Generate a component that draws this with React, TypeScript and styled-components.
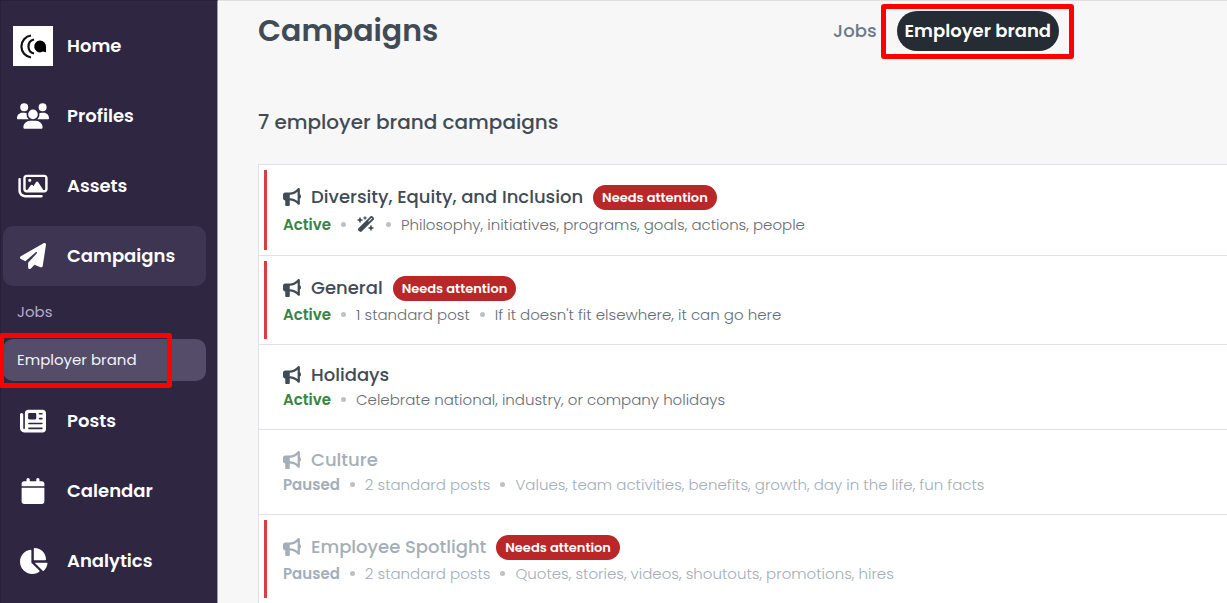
import React from 'react';
import styled, { createGlobalStyle, css } from 'styled-components';
import {
  FaBullhorn,
  FaCalendar,
  FaChartPie,
  FaNewspaper,
  FaPaperPlane,
  FaRegImages,
  FaUsers,
  FaWandMagicSparkles,
} from 'react-icons/fa6';

const GlobalStyle = createGlobalStyle`
  *, *::before, *::after { box-sizing: border-box; }
  html, body { margin: 0; height: 100%; overflow: hidden; }
  body {
    font-family: Poppins, Inter, "Open Sans", sans-serif;
    background: #f7f7f7;
    color: #414b55;
  }
  #root { height: 100%; }
  a { color: inherit; text-decoration: none; }
`;

const Page = styled.div`
  display: flex;
  min-height: 100%;
`;

const Sidebar = styled.nav`
  flex: none;
  display: flex;
  flex-direction: column;
  gap: 10px;
  width: 218px;
  padding: 15px 11px 15px 2px;
  border: 1px solid #272038;
  border-right-color: #9f9ba8;
  background: #2f2642;
`;

const NavLink = styled.a<{ $active?: boolean }>`
  display: flex;
  align-items: center;
  gap: 14px;
  height: 60px;
  padding-left: 10px;
  border-radius: 10px;
  background: ${(p) => (p.$active ? '#3e3552' : 'transparent')};
  color: #fff;
  font-size: 18px;
  font-weight: 600;
`;

const NavIcon = styled.span`
  display: flex;
  justify-content: center;
  width: 40px;

  svg {
    width: 32px;
    height: 26px;
  }
`;

const NavLabel = styled.span`
  padding-bottom: 2px;
`;

const BrandMark = styled.svg`
  && {
    width: 40px;
    height: 40px;
    background: #fff;
  }
`;

const SubNav = styled.div`
  display: flex;
  flex-direction: column;
  gap: 6px;
  margin-top: -5px;
`;

const highlight = css`
  content: '';
  position: absolute;
  border: 5px solid #fe0000;
  border-radius: 3px;
  pointer-events: none;
`;

const SubLink = styled.a<{ $active?: boolean }>`
  position: relative;
  display: flex;
  align-items: center;
  height: 42px;
  padding: 0 0 2px 14px;
  border-radius: 10px;
  background: ${(p) => (p.$active ? '#544c68' : 'transparent')};
  color: ${(p) => (p.$active ? '#f4f2f7' : '#b7abc9')};
  font-size: 15px;

  ${(p) =>
    p.$active &&
    css`
      &::after {
        ${highlight}
        inset: -6px 34px -7px -4px;
      }
    `}
`;

const Main = styled.main`
  flex: 1;
  min-width: 0;
  padding: 10px 0 0 40px;
  border-top: 1px solid #dedede;
`;

const Header = styled.header`
  display: flex;
  align-items: center;
  justify-content: space-between;
  height: 40px;
  padding-right: 168px;
`;

const Title = styled.h1`
  margin: 0;
  font-size: 30px;
  font-weight: 600;
`;

const Tabs = styled.div`
  display: flex;
  gap: 12px;
`;

const Tab = styled.button<{ $active?: boolean }>`
  position: relative;
  height: 40px;
  border: 0;
  border-radius: 20px;
  background: ${(p) => (p.$active ? '#262c33' : 'transparent')};
  color: ${(p) => (p.$active ? '#fff' : '#6c7a87')};
  font: inherit;
  font-size: 18px;
  font-weight: ${(p) => (p.$active ? 600 : 500)};
  padding: 0 8px 2px;

  ${(p) =>
    p.$active &&
    css`
      &::after {
        ${highlight}
        inset: -7px -15px -8px -16px;
      }
    `}
`;

const Count = styled.h2`
  margin: 56px 0 27px;
  font-size: 20px;
  line-height: 30px;
  font-weight: 500;
`;

const List = styled.ul`
  margin: 0;
  padding: 0;
  list-style: none;
  border: 1px solid #dfe3e7;
  border-right: 0;
  background: #fff;
`;

const Row = styled.li<{ $paused?: boolean; $flagged?: boolean }>`
  position: relative;
  padding: 17px 24px;
  color: ${(p) => (p.$paused ? '#a5aeb8' : '#414b55')};

  & + & { border-top: 1px solid #dfe3e7; }

  ${(p) =>
    p.$flagged &&
    css`
      &::before {
        content: '';
        position: absolute;
        inset: 5px auto 5px 5px;
        width: 3px;
        background: #d93d40;
      }
    `}
`;

const RowTitle = styled.h3`
  display: flex;
  align-items: center;
  gap: 10px;
  min-height: 25px;
  margin: 0;
  font-size: 18px;
  line-height: 25px;
  font-weight: 500;

  svg { width: 18px; height: 18px; }
`;

const Badge = styled.span`
  margin: 3px 0 1px;
  padding: 0 9px;
  border-radius: 13px;
  background: #b92728;
  color: #fff;
  font-size: 13px;
  font-weight: 600;
`;

const Meta = styled.div<{ $paused?: boolean }>`
  display: flex;
  align-items: center;
  gap: 10px;
  font-size: 15px;
  line-height: 25px;
  font-weight: 300;
  color: ${(p) => (p.$paused ? '#a5aeb8' : '#666d76')};
`;

const Status = styled.strong<{ $paused?: boolean }>`
  color: ${(p) => (p.$paused ? '#a5aeb8' : '#388445')};
  font-weight: 600;
`;

const Dot = styled.span`
  width: 5px;
  height: 5px;
  border-radius: 50%;
  background: #bbc1c8;
`;

const Wand = styled(FaWandMagicSparkles)`
  width: 20px;
  height: 16px;
  margin: 5px 0 6px;
  color: #414b55;
`;

type Campaign = {
  name: string;
  paused?: boolean;
  flagged?: boolean;
  auto?: boolean;
  posts?: string;
  about: string;
};

const campaigns: Campaign[] = [
  {
    name: 'Diversity, Equity, and Inclusion',
    flagged: true,
    auto: true,
    about: 'Philosophy, initiatives, programs, goals, actions, people',
  },
  {
    name: 'General',
    flagged: true,
    posts: '1 standard post',
    about: "If it doesn't fit elsewhere, it can go here",
  },
  { name: 'Holidays', about: 'Celebrate national, industry, or company holidays' },
  {
    name: 'Culture',
    paused: true,
    posts: '2 standard posts',
    about: 'Values, team activities, benefits, growth, day in the life, fun facts',
  },
  {
    name: 'Employee Spotlight',
    paused: true,
    flagged: true,
    posts: '2 standard posts',
    about: 'Quotes, stories, videos, shoutouts, promotions, hires',
  },
];

const Logo = () => (
  <BrandMark viewBox="0 0 40 40" aria-hidden="true">
    <path d="M18 9.5A11.1 11.1 0 0 0 18 31.5" fill="none" stroke="#111" strokeWidth="2.2" />
    <path d="M21 13.5A7.2 7.2 0 0 0 21 27.5" fill="none" stroke="#111" strokeWidth="2.2" />
    <path d="M27 14.6a5.9 5.9 0 1 0 3 11l3 .6v-5.7a5.9 5.9 0 0 0-6-5.9z" fill="#000" />
  </BrandMark>
);

type NavItemProps = { icon: React.ReactNode; label: string; active?: boolean };

const NavItem = ({ icon, label, active }: NavItemProps) => (
  <NavLink href="#" $active={active}>
    <NavIcon>{icon}</NavIcon>
    <NavLabel>{label}</NavLabel>
  </NavLink>
);

const CampaignRow = ({ name, paused, flagged, auto, posts, about }: Campaign) => (
  <Row $paused={paused} $flagged={flagged}>
    <RowTitle>
      <FaBullhorn />
      {name}
      {flagged && <Badge>Needs attention</Badge>}
    </RowTitle>
    <Meta $paused={paused}>
      <Status $paused={paused}>{paused ? 'Paused' : 'Active'}</Status>
      <Dot />
      {auto && <Wand />}
      {posts && <span>{posts}</span>}
      {(auto || posts) && <Dot />}
      <span>{about}</span>
    </Meta>
  </Row>
);

export default function App() {
  return (
    <>
      <GlobalStyle />
      <Page>
        <Sidebar>
          <NavItem icon={<Logo />} label="Home" />
          <NavItem icon={<FaUsers />} label="Profiles" />
          <NavItem icon={<FaRegImages />} label="Assets" />
          <NavItem icon={<FaPaperPlane />} label="Campaigns" active />
          <SubNav>
            <SubLink href="#">Jobs</SubLink>
            <SubLink href="#" $active>
              Employer brand
            </SubLink>
          </SubNav>
          <NavItem icon={<FaNewspaper />} label="Posts" />
          <NavItem icon={<FaCalendar />} label="Calendar" />
          <NavItem icon={<FaChartPie />} label="Analytics" />
        </Sidebar>
        <Main>
          <Header>
            <Title>Campaigns</Title>
            <Tabs>
              <Tab type="button">Jobs</Tab>
              <Tab type="button" $active>
                Employer brand
              </Tab>
            </Tabs>
          </Header>
          <Count>7 employer brand campaigns</Count>
          <List>
            {campaigns.map((c) => (
              <CampaignRow key={c.name} {...c} />
            ))}
          </List>
        </Main>
      </Page>
    </>
  );
}
